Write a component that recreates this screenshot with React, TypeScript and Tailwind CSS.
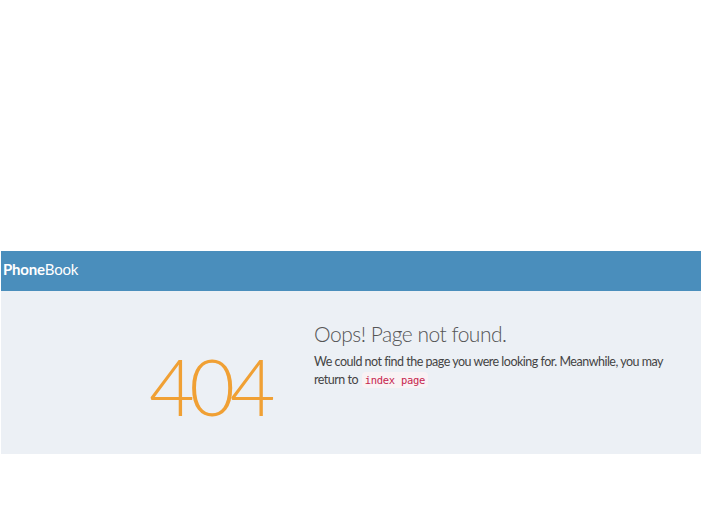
export default function App() {
  return (
    <div className="w-[702px] h-[518px] bg-white" style={{ fontFamily: '"Source Sans Pro", Lato, "Liberation Sans", sans-serif' }}>
      <div className="h-[251px]" />
      <div className="mx-[1px] w-[700px]">
        <div className="h-[40px] bg-[#4a8ebc] flex items-center pl-[2px] pb-[3px] text-white text-[15px] tracking-[-0.2px]">
          <span className="font-bold">Phone</span>
          <span>Book</span>
        </div>
        <div className="h-[163px] bg-[#ecf0f5] flex pl-[148px]">
          <div className="w-[165px] pt-[55px] text-[79px] leading-none font-light text-[#f0a034] tracking-[-5.5px]">404</div>
          <div className="pt-[32px] text-[#444]">
            <div className="text-[21px] font-light leading-none text-[#555] tracking-[-0.5px]">Oops! Page not found.</div>
            <p className="mt-[9px] text-[12.5px] leading-[18px] text-[#444] tracking-[-0.5px]">
              We could not find the page you were looking for. Meanwhile, you may
              <br />
              return to{" "}
              <code className="ml-[1px] px-[3px] py-[2px] rounded-[4px] bg-[#f9f2f4] text-[#c7254e] text-[10.5px] tracking-[-0.3px]" style={{ fontFamily: '"DejaVu Sans Mono", "Liberation Mono", monospace' }}>
                index page
              </code>
            </p>
          </div>
        </div>
      </div>
    </div>
  );
}
